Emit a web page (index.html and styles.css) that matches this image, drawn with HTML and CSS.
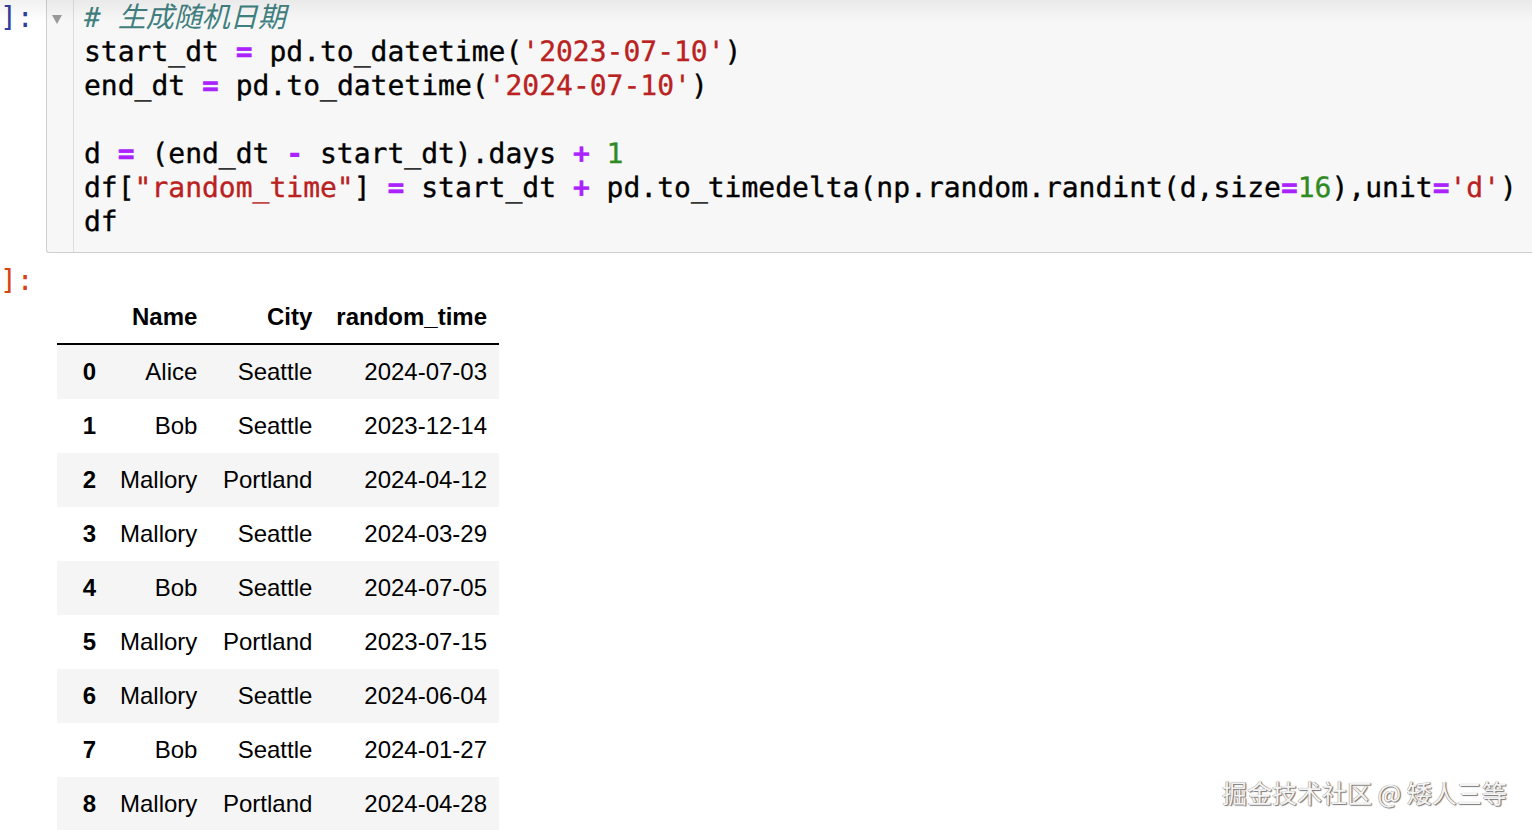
FILE: index.html
```html
<!DOCTYPE html>
<html lang="zh">
<head>
<meta charset="utf-8">
<title>Notebook</title>
<link rel="stylesheet" href="styles.css">
</head>
<body>
<div class="top-shade"></div>
<div class="cell cell-input">
  <div class="prompt prompt-in">]:</div>
  <div class="editor">
    <div class="gutter">
      <svg class="fold" width="10" height="9" viewBox="0 0 10 9"><polygon points="0,0 10,0 5,9" fill="#9a9a9a"/></svg>
    </div>
    <div class="code">
      <div class="line"><span class="c"># 生成随机日期</span></div>
      <div class="line">start_dt <span class="o">=</span> pd.to_datetime(<span class="s">'2023-07-10'</span>)</div>
      <div class="line">end_dt <span class="o">=</span> pd.to_datetime(<span class="s">'2024-07-10'</span>)</div>
      <div class="line"> </div>
      <div class="line">d <span class="o">=</span> (end_dt <span class="o">-</span> start_dt).days <span class="o">+</span> <span class="n">1</span></div>
      <div class="line">df[<span class="s">"random_time"</span>] <span class="o">=</span> start_dt <span class="o">+</span> pd.to_timedelta(np.random.randint(d,size<span class="o">=</span><span class="n">16</span>),unit<span class="o">=</span><span class="s">'d'</span>)</div>
      <div class="line">df</div>
    </div>
  </div>
</div>
<div class="cell cell-output">
  <div class="prompt prompt-out">]:</div>
  <div class="out-area">
    <table class="df">
      <thead>
        <tr><th class="idx"></th><th>Name</th><th>City</th><th>random_time</th></tr>
      </thead>
      <tbody>
        <tr><th class="idx">0</th><td>Alice</td><td>Seattle</td><td>2024-07-03</td></tr>
        <tr><th class="idx">1</th><td>Bob</td><td>Seattle</td><td>2023-12-14</td></tr>
        <tr><th class="idx">2</th><td>Mallory</td><td>Portland</td><td>2024-04-12</td></tr>
        <tr><th class="idx">3</th><td>Mallory</td><td>Seattle</td><td>2024-03-29</td></tr>
        <tr><th class="idx">4</th><td>Bob</td><td>Seattle</td><td>2024-07-05</td></tr>
        <tr><th class="idx">5</th><td>Mallory</td><td>Portland</td><td>2023-07-15</td></tr>
        <tr><th class="idx">6</th><td>Mallory</td><td>Seattle</td><td>2024-06-04</td></tr>
        <tr><th class="idx">7</th><td>Bob</td><td>Seattle</td><td>2024-01-27</td></tr>
        <tr><th class="idx">8</th><td>Mallory</td><td>Portland</td><td>2024-04-28</td></tr>
      </tbody>
    </table>
  </div>
</div>
<div class="watermark">掘金技术社区 @ 矮人三等</div>
</body>
</html>
```

FILE: styles.css
```css
html, body {
  margin: 0;
  padding: 0;
  background: #ffffff;
  overflow: hidden;
}

body {
  width: 1532px;
  height: 830px;
  position: relative;
  font-family: "DejaVu Sans Mono", "Liberation Mono", monospace;
}

.top-shade {
  position: absolute;
  left: 0;
  top: 0;
  width: 100%;
  height: 22px;
  background: linear-gradient(to bottom, rgba(0, 0, 0, 0.055), rgba(0, 0, 0, 0));
  pointer-events: none;
  z-index: 2;
}

.cell {
  display: flex;
  align-items: flex-start;
}

.prompt {
  width: 46px;
  flex: 0 0 46px;
  font-family: "DejaVu Sans Mono", "Liberation Mono", monospace;
  font-size: 28px;
  line-height: 34px;
  white-space: pre;
  overflow: hidden;
}

.prompt-in {
  color: #303f9f;
  padding-top: 1px;
}

.prompt-out {
  color: #d84315;
  padding-top: 11px;
}

.editor {
  flex: 1;
  display: flex;
  background: #f7f7f7;
  border-left: 1px solid #cfcfcf;
  border-bottom: 1px solid #cfcfcf;
  border-bottom-left-radius: 3px;
}

.gutter {
  width: 26px;
  flex: 0 0 26px;
  border-right: 1px solid #dddddd;
  align-self: stretch;
}

.fold {
  display: block;
  margin: 15px 0 0 5px;
}

.code {
  padding: 1px 0 13px 10px;
  font-family: "DejaVu Sans Mono", "Liberation Mono", monospace;
  font-size: 28px;
  color: #000000;
  text-rendering: geometricPrecision;
  -webkit-text-stroke: 0.35px currentColor;
}

.line {
  height: 34px;
  line-height: 34px;
  white-space: pre;
}

.code .c {
  color: #408080;
  font-style: italic;
  font-family: "DejaVu Sans Mono", "Noto Sans CJK SC", monospace;
  -webkit-text-stroke: 0;
}

.code .o {
  color: #aa22ff;
  font-weight: bold;
}

.code .s {
  color: #ba2121;
}

.code .n {
  color: #2e8b22;
}

.out-area {
  padding: 36px 0 0 11px;
}

.df {
  border-collapse: collapse;
  border-spacing: 0;
  font-family: "Liberation Sans", Arial, "Noto Sans CJK SC", sans-serif;
  font-size: 24px;
  color: #000000;
}

.df th,
.df td {
  padding: 12px 12px;
  line-height: 30px;
  text-align: right;
  vertical-align: middle;
  white-space: nowrap;
}

.df th {
  font-weight: bold;
}

.df td {
  font-weight: normal;
}

.df thead th {
  border-bottom: 2px solid #000000;
  padding-top: 13px;
  padding-bottom: 11px;
}

.df .idx {
  width: 27px;
  min-width: 27px;
}

.df td:nth-child(3) {
  min-width: 91px;
}

.df tbody tr:nth-child(odd) {
  background: #f5f5f5;
}

.watermark {
  position: absolute;
  left: 1222px;
  top: 776px;
  font-family: "Noto Sans CJK SC", "Liberation Sans", sans-serif;
  font-size: 25px;
  line-height: 32px;
  color: #f4f4f4;
  white-space: nowrap;
  text-shadow: 1px 1px 1px #7a7a7a, -0.5px -0.5px 0 #9a9a9a, 1px 0 1px #8a8a8a;
  z-index: 3;
}
```
